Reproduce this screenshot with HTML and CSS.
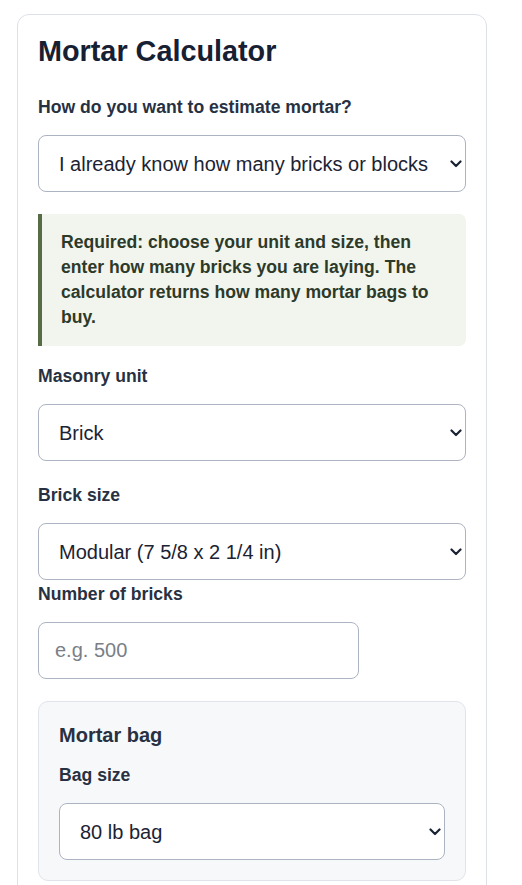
FILE: index.html
```html
<!DOCTYPE html>
<html lang="en">
<head>
    <meta charset="UTF-8">
    <title>Mortar Calculator</title>

    <link rel="stylesheet" href="styles.css">

</head>
<body>

<div class="card">
    <h1 class="title">Mortar Calculator</h1>

    <div class="field">
        <label for="mode">How do you want to estimate mortar?</label>
        <div class="select_wrap">
            <select id="mode">
                <option>I already know how many bricks or blocks</option>
                <option>I know the wall size</option>
            </select>
            <svg class="chevron" width="12" height="8" viewBox="0 0 12 8"><path d="M1.5 1.5 L6 6 L10.5 1.5"/></svg>
        </div>
    </div>

    <div class="note">
        Required: choose your unit and size, then enter how many bricks you are laying. The calculator returns how many mortar bags to buy.
    </div>

    <div class="field field_wide">
        <label for="unit">Masonry unit</label>
        <div class="select_wrap">
            <select id="unit">
                <option>Brick</option>
                <option>Block</option>
            </select>
            <svg class="chevron" width="12" height="8" viewBox="0 0 12 8"><path d="M1.5 1.5 L6 6 L10.5 1.5"/></svg>
        </div>
    </div>

    <div class="field field_tight">
        <label for="size">Brick size</label>
        <div class="select_wrap">
            <select id="size">
                <option>Modular (7 5/8 x 2 1/4 in)</option>
                <option>Standard (8 x 2 1/4 in)</option>
                <option>Queen (7 5/8 x 2 3/4 in)</option>
            </select>
            <svg class="chevron" width="12" height="8" viewBox="0 0 12 8"><path d="M1.5 1.5 L6 6 L10.5 1.5"/></svg>
        </div>
    </div>

    <div class="field">
        <label for="count">Number of bricks</label>
        <input id="count" class="input_short" type="number" placeholder="e.g. 500">
    </div>

    <div class="bag">
        <h2 class="bag_title">Mortar bag</h2>
        <div class="field">
            <label for="bag">Bag size</label>
            <div class="select_wrap">
                <select id="bag">
                    <option>80 lb bag</option>
                    <option>60 lb bag</option>
                </select>
                <svg class="chevron" width="12" height="8" viewBox="0 0 12 8"><path d="M1.5 1.5 L6 6 L10.5 1.5"/></svg>
            </div>
        </div>
    </div>
</div>

</body>
</html>
```

FILE: styles.css
```css
* {
    box-sizing: border-box;
}

body {
    margin: 0;
    background-color: #ffffff;
    font-family: "Liberation Sans", Arial, sans-serif;
    color: #1f2937;
}

.card {
    width: 470px;
    margin: 14px 0 0 17px;
    padding: 20px;
    border: 1px solid #dde1e7;
    border-radius: 12px;
    background-color: #ffffff;
}

.title {
    margin: 0 0 29px;
    font-size: 28.8px;
    font-weight: bold;
    color: #172033;
}

.field {
    margin-bottom: 22px;
}

.field_wide {
    margin-bottom: 24px;
}

.field_tight {
    margin-bottom: 4px;
}

.field label {
    display: block;
    margin-bottom: 18px;
    font-size: 17.6px;
    line-height: 20px;
    font-weight: bold;
    color: #273142;
}

select,
input {
    display: block;
    width: 100%;
    height: 57px;
    padding: 0 16px;
    border: 1px solid #adb4c1;
    border-radius: 8px;
    background-color: #ffffff;
    font-family: "Liberation Sans", Arial, sans-serif;
    font-size: 20px;
    color: #1b2333;
}

select {
    appearance: none;
    -webkit-appearance: none;
    padding: 0 30px 0 20px;
}

input::placeholder {
    color: #7a7f87;
}

.input_short {
    width: 321px;
}

.select_wrap {
    position: relative;
}

.chevron {
    position: absolute;
    right: 4px;
    top: 50%;
    margin-top: -4px;
    pointer-events: none;
}

.chevron path {
    fill: none;
    stroke: #1b2333;
    stroke-width: 2.2;
    stroke-linecap: round;
    stroke-linejoin: round;
}

.note {
    margin-bottom: 20px;
    padding: 16px 20px 16px 19px;
    border-left: 4px solid #566b46;
    border-radius: 0 7px 7px 0;
    background-color: #f2f5ee;
    font-size: 17.6px;
    line-height: 25px;
    font-weight: bold;
    color: #2d3a2a;
}

.bag {
    margin-top: 22px;
    padding: 22px 20px 20px;
    border: 1px solid #e0e4ea;
    border-radius: 10px;
    background-color: #f7f8fa;
}

.bag_title {
    margin: 0 0 18px;
    font-size: 20px;
    font-weight: bold;
    color: #273142;
}

.bag .field {
    margin-bottom: 0;
}
```
